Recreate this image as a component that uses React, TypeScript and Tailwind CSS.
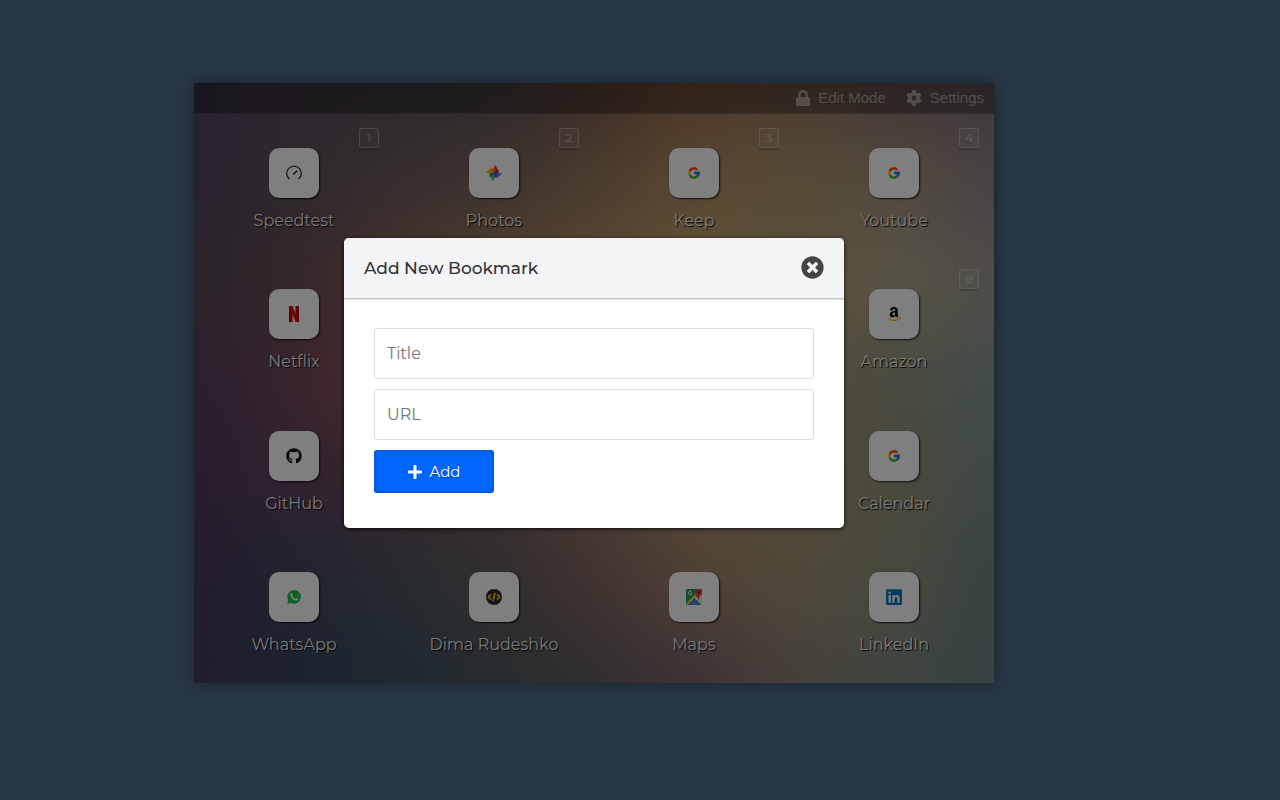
import type { ReactNode } from 'react';
import { FaAmazon, FaCog, FaGithub, FaLinkedin, FaLock, FaPlus, FaTimesCircle } from 'react-icons/fa';
import { FcGoogle } from 'react-icons/fc';

const wallpaperColors = [
  '504462 5a505e 58525a 5c5656 7a584a a46c4c 94745e 88706c 7e727c',
  '50445a 5c505a 6c5c5c 78665c 967a5e b09066 ae966e a4947c 90848a',
  '544856 664c56 946258 aa805e b69066 c4a468 b8a074 aea88a 9e9a94',
  '563e5a 70485a a0525a 986060 a8806a b0906a a89474 94967e 829896',
  '4e3a5c 5c445c 6e4858 70605e 967464 b09070 a89478 949276 7c908e',
  '463858 404660 4a565e 605c5e 826660 a08068 9e9272 8e927c 708686',
  '423c58 384460 3c5060 4c565c 605c60 78646a 8c8074 7e8a80 6a8684',
].map((row) => row.split(' '));

function Wallpaper() {
  return (
    <svg
      className="absolute inset-0 h-full w-full"
      viewBox="0 0 800 600"
      preserveAspectRatio="none"
      aria-hidden="true"
    >
      <defs>
        <filter
          id="soften"
          filterUnits="userSpaceOnUse"
          x="-150"
          y="-150"
          width="1100"
          height="900"
          colorInterpolationFilters="sRGB"
        >
          <feGaussianBlur stdDeviation="38" />
        </filter>
      </defs>
      <g filter="url(#soften)">
        {wallpaperColors.map((row, r) =>
          row.map((color, c) => {
            const left = c === 0 ? -150 : c * 100 - 50;
            const top = r === 0 ? -150 : r * 100 - 50;
            return (
              <rect
                key={`${r}-${c}`}
                x={left}
                y={top}
                width={c === 0 ? 201 : c === 8 ? 250 : 101}
                height={r === 0 ? 201 : r === 6 ? 250 : 101}
                fill={`#${color}`}
              />
            );
          }),
        )}
      </g>
    </svg>
  );
}

function SpeedtestIcon() {
  return (
    <svg width="16" height="16" viewBox="0 0 16 16" fill="none" stroke="#2a2b36" strokeWidth="1.3">
      <path d="M3.4 14A7.300 7.300 0 1 1 12.6 14" />
      <path d="M7.200 9.400 11.300 5.800" strokeWidth="1.500" />
    </svg>
  );
}

function PhotosIcon() {
  return (
    <svg width="16" height="16" viewBox="0 0 16 16">
      <path fill="#ea4335" d="M8 0c2.6 1.6 4.400 3.800 4.400 7H8z" />
      <path fill="#b0174c" d="M8 7.500l4.400-3V8H8z" />
      <path fill="#4285f4" d="M16 8c-1.600 2.600-3.800 4.400-7 4.400V8z" />
      <path fill="#3367d6" d="M8 8h1l3.200 4.400H8z" />
      <path fill="#7cb342" d="M8 16c-2.600-1.600-4.400-3.800-4.400-7H8z" />
      <path fill="#009688" d="M3.600 8H8v1l-4.400 3.400z" />
      <path fill="#fbbc04" d="M0 8c1.600-2.600 3.800-4.400 7-4.400V8z" />
      <path fill="#f29900" d="M4 3.600h4V8H7z" />
    </svg>
  );
}

function NetflixIcon() {
  return (
    <svg width="16" height="16" viewBox="0 0 16 16">
      <path fill="#b1060f" d="M3 0h3.500v16H3zM9.500 0H13v16H9.500z" />
      <path fill="#e50914" d="M3 0h3.500L13 16H9.500z" />
    </svg>
  );
}

function AmazonIcon() {
  return (
    <svg width="16" height="16" viewBox="0 0 16 16">
      <defs>
        <clipPath id="amazon-letter">
          <rect width="16" height="11.700" />
        </clipPath>
        <clipPath id="amazon-smile">
          <rect y="11.700" width="16" height="4.300" />
        </clipPath>
      </defs>
      <g clipPath="url(#amazon-letter)" color="#000">
        <FaAmazon size="16" />
      </g>
      <g clipPath="url(#amazon-smile)" color="#ff9900">
        <FaAmazon size="16" />
      </g>
    </svg>
  );
}

function WhatsAppIcon() {
  return (
    <svg width="16" height="16" viewBox="0 0 16 16">
      <path fill="#25c04a" d="M1.200 14.800l1-3.600A6.800 6.800 0 1 1 5 13.900z" />
      <path
        fill="#fff"
        d="M5.600 4.200c-.9.100-1.500 1-1.300 2.100.5 2.700 2.800 4.900 5.600 5.300 1 .1 2-.5 2-1.500 0-.3-1.600-1.100-1.900-1.100-.4 0-.7.900-1.100.9-.9-.2-2.400-1.600-2.700-2.600 0-.4.700-.7.700-1.100 0-.4-.6-2-1.300-2z"
      />
    </svg>
  );
}

function CodeIcon() {
  return (
    <svg width="16" height="16" viewBox="0 0 16 16" fill="none" stroke="#f5c211" strokeWidth="1.700">
      <circle cx="8" cy="8" r="8" fill="#2b2b2f" stroke="none" />
      <path d="M5 5.300 2.500 8 5 10.700M11 5.300 13.500 8 11 10.700M9 3.800 7 12.200" />
    </svg>
  );
}

function MapsIcon() {
  return (
    <svg width="16" height="16" viewBox="0 0 16 16">
      <rect width="16" height="16" rx="1.200" fill="#1e9e5a" />
      <path fill="#e8e8e8" d="M16 5v10.500L9 8.500z" />
      <path fill="#4285f4" d="M2 16l6-6.500 6 6.500z" />
      <path d="M.7 15.300 10 6" stroke="#ffda3a" strokeWidth="2" />
      <path d="M9 8.500l7 7" stroke="#f5f5f5" strokeWidth="1.400" />
      <path d="M5.400 3A1.700 1.700 0 1 0 5.700 4.300H4.200" fill="none" stroke="#fff" strokeWidth="1" />
      <path fill="#ea4335" d="M12.500 0A3.500 3.500 0 0 0 9 3.500c0 2.600 2.700 3.500 3.500 8 .8-4.500 3.500-5.400 3.500-8A3.500 3.500 0 0 0 12.500 0z" />
      <circle cx="12.500" cy="3.500" r="1.300" fill="#811411" />
    </svg>
  );
}

interface Bookmark {
  title: string;
  icon: ReactNode;
  shortcut?: number;
  place?: string;
}

const google = <FcGoogle className="size-[14px]" />;

const bookmarks: Bookmark[] = [
  { title: 'Speedtest', icon: <SpeedtestIcon />, shortcut: 1 },
  { title: 'Photos', icon: <PhotosIcon />, shortcut: 2 },
  { title: 'Keep', icon: google, shortcut: 3 },
  { title: 'Youtube', icon: google, shortcut: 4 },
  { title: 'Netflix', icon: <NetflixIcon /> },
  { title: 'Amazon', icon: <AmazonIcon />, shortcut: 8, place: 'col-start-4' },
  { title: 'GitHub', icon: <FaGithub className="size-4 text-[#191717]" /> },
  { title: 'Calendar', icon: google, place: 'col-start-4' },
  { title: 'WhatsApp', icon: <WhatsAppIcon /> },
  { title: 'Dima Rudeshko', icon: <CodeIcon /> },
  { title: 'Maps', icon: <MapsIcon /> },
  { title: 'LinkedIn', icon: <FaLinkedin className="size-[18px] text-[#0077b5]" /> },
];

function BookmarkTile({ title, icon, shortcut, place = '' }: Bookmark) {
  return (
    <a href="#" className={`relative flex flex-col items-center pt-[34px] ${place}`}>
      {shortcut && (
        <span className="absolute top-[14px] right-[15px] flex size-5 items-center justify-center rounded-[3px] border border-white/30 bg-white/5 text-[12px] text-white/45 shadow-[0_2px_1px_rgba(0,0,0,0.2)]">
          {shortcut}
        </span>
      )}
      <span className="flex size-[50px] items-center justify-center rounded-[10px] bg-white shadow-[1px_1px_2px_rgba(0,0,0,0.8)]">
        {icon}
      </span>
      <span className="mt-[11px] text-[16px] leading-6 text-white/95 [text-shadow:1px_1px_1px_#000]">
        {title}
      </span>
    </a>
  );
}

function AddBookmarkDialog() {
  return (
    <section
      role="dialog"
      aria-labelledby="dialog-title"
      className="w-full max-w-[500px] overflow-hidden rounded-[5px] bg-white shadow-[0_1px_4px_rgba(0,0,0,0.8)]"
    >
      <header className="flex h-[61px] items-center justify-between border-b border-[#bfc2c5] bg-[#f3f4f6] px-5 pb-px shadow-[0_1px_1px_rgba(0,0,0,0.1)]">
        <h2 id="dialog-title" className="text-[17px] leading-6 font-medium text-[#333333]">
          Add New Bookmark
        </h2>
        <button type="button" aria-label="Close" className="text-[#444444]">
          <FaTimesCircle className="size-[23px]" />
        </button>
      </header>
      <form className="flex flex-col items-start gap-[10px] px-[30px] pt-[29px] pb-[35px]">
        <input
          type="text"
          aria-label="Title"
          placeholder="Title"
          className="h-[51px] w-full rounded-[3px] border border-[#dddddd] px-3 text-[16px] placeholder:text-[#757575]"
        />
        <input
          type="text"
          aria-label="URL"
          placeholder="URL"
          className="h-[51px] w-full rounded-[3px] border border-[#dddddd] px-3 text-[16px] placeholder:text-[#757575]"
        />
        <button
          type="button"
          className="flex h-[43px] w-[120px] items-center justify-center gap-[6px] rounded-[3px] bg-[#0066ff] text-[15px] leading-6 text-white shadow-[inset_0_0_4px_rgba(0,0,0,0.3)] [text-shadow:1px_1px_1px_rgba(0,0,0,0.3)]"
        >
          <FaPlus className="size-4" />
          Add
        </button>
      </form>
    </section>
  );
}

export default function App() {
  return (
    <main className="flex min-h-screen items-center justify-center bg-[#283747] pr-[92px] pb-[34px] font-['Montserrat','Inter',sans-serif]">
      <div className="relative flex min-h-[600px] w-full max-w-[800px] flex-col overflow-hidden shadow-[0_0_15px_rgba(0,0,0,0.4)]">
        <Wallpaper />
        <nav className="relative flex h-[31px] items-center justify-end gap-5 border-b border-white/10 bg-black/35 px-[10px] font-['Liberation_Sans',sans-serif] text-[15px] leading-6 text-white/45">
          <button type="button" className="flex items-center gap-2">
            <FaLock className="h-4 w-[14px]" />
            Edit Mode
          </button>
          <button type="button" className="flex items-center gap-2">
            <FaCog className="size-4" />
            Settings
          </button>
        </nav>
        <div className="relative grid flex-1 grid-cols-4 grid-rows-4 pb-1">
          {bookmarks.map((bookmark) => (
            <BookmarkTile key={bookmark.title} {...bookmark} />
          ))}
        </div>
        <div className="absolute inset-0 flex items-center justify-center bg-black/50">
          <AddBookmarkDialog />
        </div>
      </div>
    </main>
  );
}
